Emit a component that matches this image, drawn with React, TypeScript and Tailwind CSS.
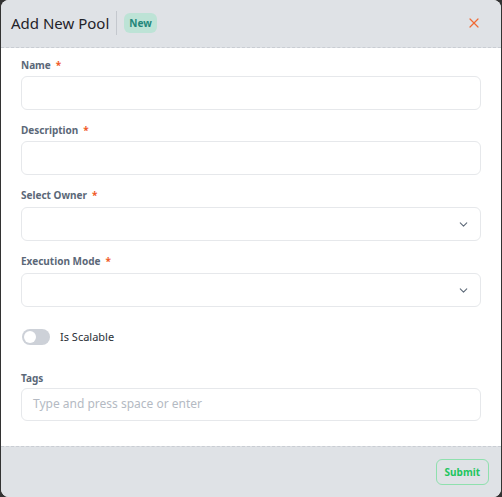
import { X, ChevronDown } from "lucide-react";

function Label({ text, required = true }: { text: string; required?: boolean }) {
  return (
    <div className="flex h-[14px] items-center gap-[5px] text-[10px] font-bold text-[#5b6878]">
      <span>{text}</span>
      {required && <span className="text-[#f05a28]">*</span>}
    </div>
  );
}

function TextField({ label }: { label: string }) {
  return (
    <div className="flex flex-col gap-[4px]">
      <Label text={label} />
      <div className="h-[34px] rounded-md border border-[#e6e8eb] bg-white" />
    </div>
  );
}

function SelectField({ label }: { label: string }) {
  return (
    <div className="flex flex-col gap-[5px]">
      <Label text={label} />
      <div className="flex h-[34px] items-center justify-end rounded-md border border-[#e6e8eb] bg-white pr-[10px]">
        <ChevronDown size={13} strokeWidth={2} className="text-[#5f6b7a]" />
      </div>
    </div>
  );
}

export default function App() {
  return (
    <div className="min-h-screen bg-[#333333] pl-px font-['Noto_Sans','Open_Sans',sans-serif]">
      <div className="flex h-[497px] w-[500px] flex-col overflow-hidden rounded-lg bg-white">
        <div className="flex h-[48px] shrink-0 items-center border-b border-dashed border-[#c9cdd3] bg-[#dfe2e6] pb-px pl-[10px] pr-[19px]">
          <span className="text-[15px] text-[#1f2329]">Add New Pool</span>
          <div className="mx-[7px] h-[24px] w-px bg-[#c4c8ce]" />
          <span className="flex h-[20px] items-center rounded-md bg-[#bde3d6] px-[5px] text-[10px] font-bold text-[#23867a]">
            New
          </span>
          <X size={16} strokeWidth={1.8} className="ml-auto text-[#f06a35]" />
        </div>

        <div className="flex flex-1 flex-col px-5 pt-[10px]">
          <div className="flex flex-col gap-[13px]">
            <TextField label="Name" />
            <TextField label="Description" />
            <SelectField label="Select Owner" />
            <SelectField label="Execution Mode" />
          </div>

          <div className="mt-[22px] flex items-center gap-[10px] pl-px">
            <div className="flex h-[16px] w-[28px] items-center rounded-full bg-[#cdd1d8] px-[2px]">
              <div className="h-[12px] w-[12px] rounded-full bg-white" />
            </div>
            <span className="text-[11px] text-[#2a2f36]">Is Scalable</span>
          </div>

          <div className="mt-[26px] flex flex-col gap-[2px]">
            <div className="flex h-[14px] items-center text-[10px] font-bold text-[#5b6878]">Tags</div>
            <div className="flex h-[33px] items-center rounded-md border border-[#e6e8eb] bg-white px-[11px] text-[12px] text-[#b4bac3]">
              Type and press space or enter
            </div>
          </div>
        </div>

        <div className="flex h-[51px] shrink-0 items-center justify-end border-t border-dashed border-[#c9cdd3] bg-[#dfe2e6] pr-[12px]">
          <button className="h-[26px] rounded-md border border-[#8fe0ae] px-[8px] text-[10px] font-bold text-[#22c55e]">
            Submit
          </button>
        </div>
      </div>
    </div>
  );
}
